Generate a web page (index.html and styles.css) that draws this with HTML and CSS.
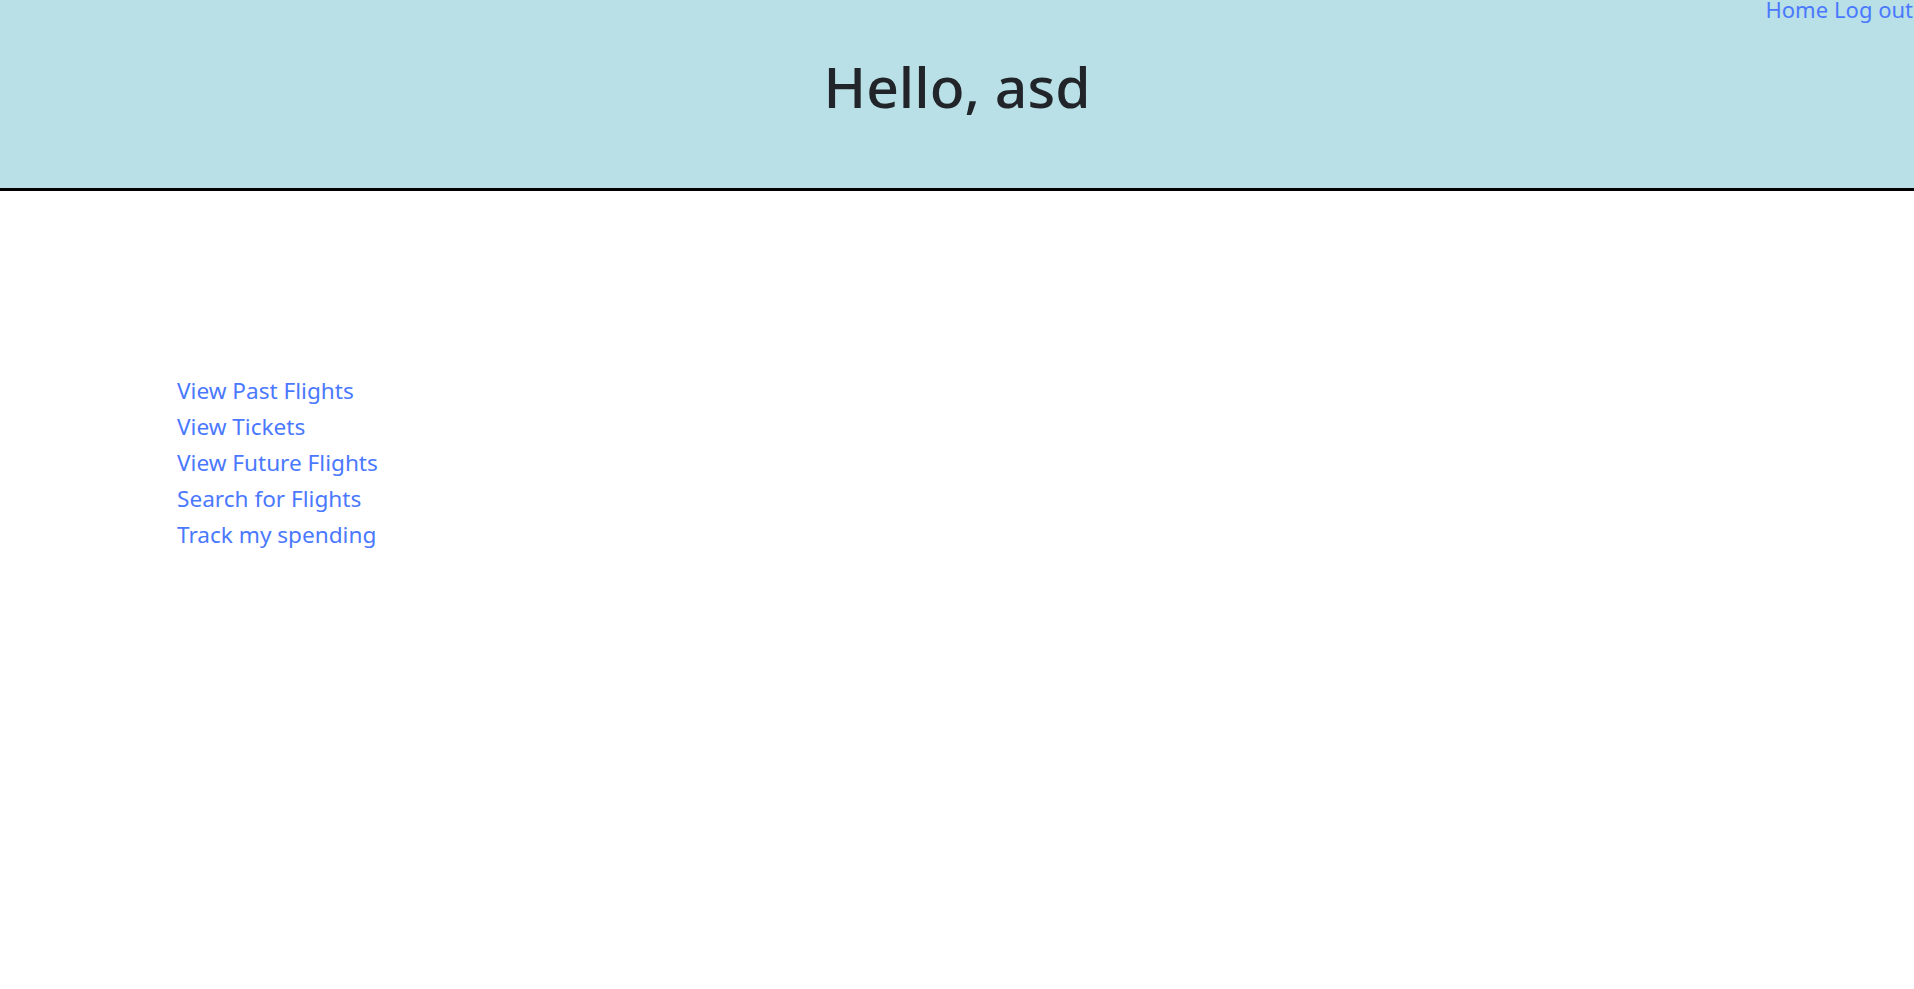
FILE: index.html
```html
<!DOCTYPE html>
<html lang="en">
<head>
<meta charset="utf-8">
<title>Hello, asd</title>
<link rel="stylesheet" href="styles.css">
</head>
<body>
<header class="top">
  <nav class="topnav">
    <a href="#">Home</a>
    <a href="#">Log out</a>
  </nav>
  <h1 class="greeting">Hello, asd</h1>
</header>
<main class="content">
  <ul class="menu">
    <li><a href="#">View Past Flights</a></li>
    <li><a href="#">View Tickets</a></li>
    <li><a href="#">View Future Flights</a></li>
    <li><a href="#">Search for Flights</a></li>
    <li><a href="#">Track my spending</a></li>
  </ul>
</main>
</body>
</html>
```
FILE: styles.css
```css
html, body {
  margin: 0;
  padding: 0;
}
body {
  font-family: "Noto Sans", "Open Sans", sans-serif;
  color: #212529;
  background: #fff;
  overflow: hidden;
}
a {
  color: #4a78ff;
  text-decoration: none;
}
.top {
  background: #b9e0e6;
  height: 188px;
  border-bottom: 3px solid #000;
  display: flex;
  flex-direction: column;
}
.topnav {
  display: flex;
  justify-content: flex-end;
  gap: 6px;
  font-size: 22px;
  line-height: 22px;
  height: 22px;
  margin-right: 1px;
  margin-top: -2px;
  overflow: visible;
  white-space: nowrap;
}
.greeting {
  margin: 31px 0 0;
  text-align: center;
  font-size: 57px;
  font-weight: 500;
  line-height: 70px;
}
.content {
  padding: 182px 0 0 177px;
}
.menu {
  list-style: none;
  margin: 0;
  padding: 0;
  font-size: 22.6px;
  line-height: 36px;
}
```
